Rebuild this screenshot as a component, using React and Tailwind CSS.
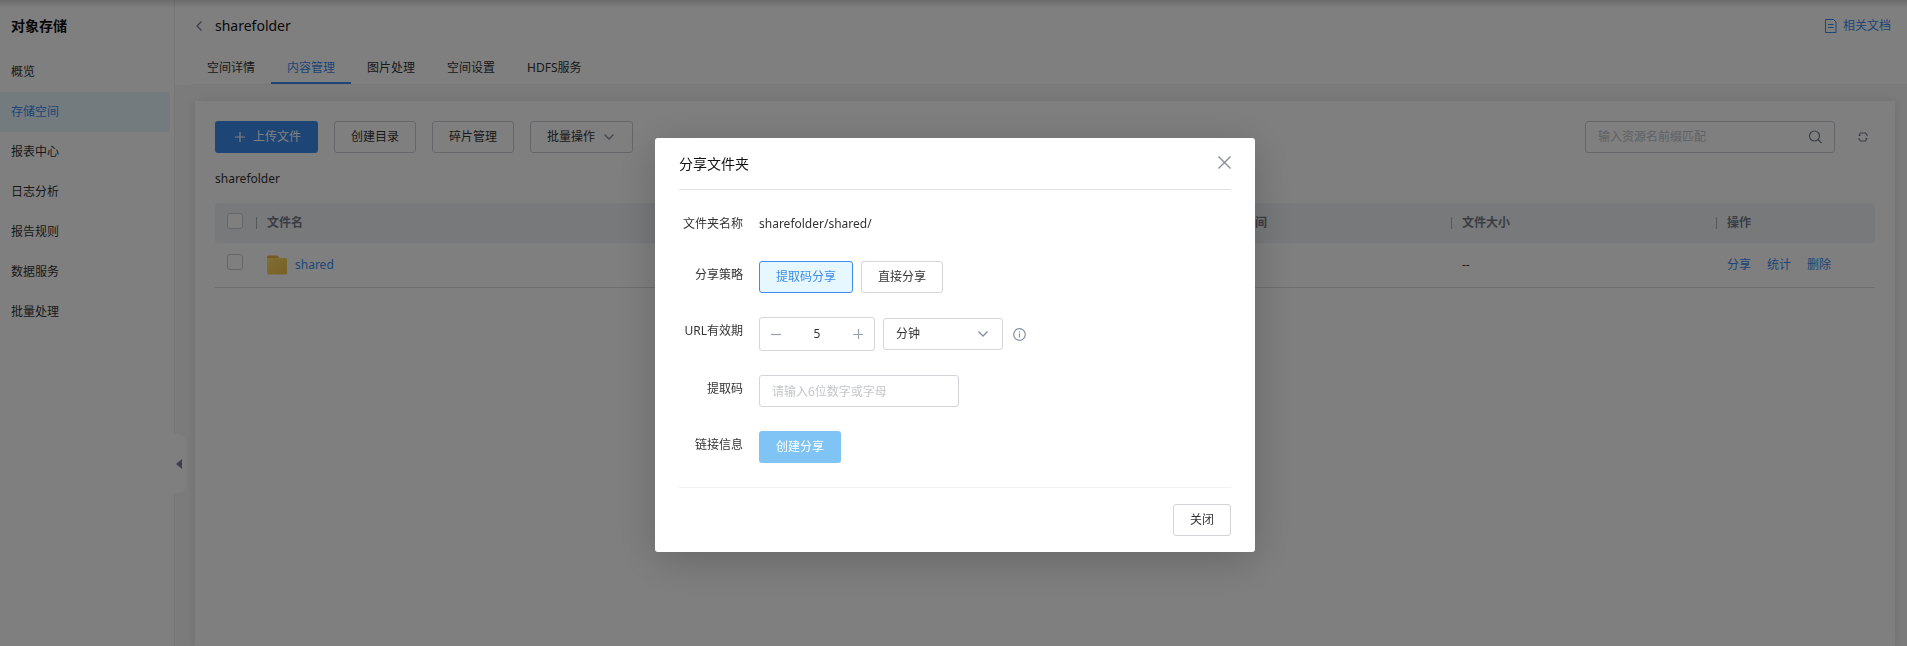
import { useState } from 'react';

const menus = ['概览', '存储空间', '报表中心', '日志分析', '报告规则', '数据服务', '批量处理'];
const tabs = ['空间详情', '内容管理', '图片处理', '空间设置', 'HDFS服务'];

const Chevron = ({ className }) => (
  <svg className={className} width="12" height="12" viewBox="0 0 12 12" fill="none" stroke="currentColor" strokeWidth="1.3">
    <path d="M1.5 3.500l4.500 4.500L10.500 3.500" />
  </svg>
);

const FolderIcon = () => (
  <svg width="20" height="20" viewBox="0 0 20 20">
    <defs>
      <linearGradient id="folder" x1="0" y1="0" x2="1" y2="1">
        <stop offset="0" stopColor="#ffde6c" />
        <stop offset="1" stopColor="#f3be48" />
      </linearGradient>
    </defs>
    <path d="M0 2a1.5 1.5 0 011.500-1.500h8.500a1.500 1.500 0 011.500 1.500L12.500 4H0z" fill="#eeb045" />
    <path d="M0 3h18.500A1.500 1.500 0 0120 4.500v13.500a1.500 1.500 0 01-1.500 1.500h-17A1.500 1.500 0 010 18z" fill="url(#folder)" />
  </svg>
);

const HeadCell = ({ className = '', children }) => (
  <th scope="col" className={`p-0 text-left font-bold text-[#757b87] ${className}`}>
    <div className="flex items-center gap-[10px]">
      <span className="h-3 w-px bg-[#a9aeb8]" />
      {children}
    </div>
  </th>
);

const Checkbox = ({ label }) => (
  <input
    type="checkbox"
    aria-label={label}
    className="block size-4 appearance-none rounded-[3px] border border-[#c9cdd4] bg-white checked:bg-[#3b8ced]"
  />
);

const Sidebar = () => (
  <aside className="relative w-[175px] shrink-0 border-r border-[#eeeef0] bg-white">
    <h1 className="px-[11px] pt-4 text-sm leading-5 font-bold text-[#111]">对象存储</h1>
    <nav className="mt-4 pr-1">
      {menus.map((item) => (
        <a
          key={item}
          href="#"
          className={`flex h-10 items-center rounded-r-[3px] px-[11px] ${
            item === '存储空间' ? 'bg-[#e6f7ff] text-[#3b8ced]' : ''
          }`}
        >
          {item}
        </a>
      ))}
    </nav>
    <button
      type="button"
      aria-label="收起菜单"
      className="absolute top-[434px] -right-3 flex h-[59px] w-[13px] items-center rounded-r-lg bg-white pl-[3px]"
    >
      <svg width="6" height="10" viewBox="0 0 6 10" fill="#7b838f">
        <path d="M6 0v10L0 5z" />
      </svg>
    </button>
  </aside>
);

const Toolbar = () => (
  <div className="flex items-center gap-4">
    <button type="button" className="flex h-8 w-[103px] items-center gap-2 rounded-[3px] bg-[#3b8ced] pl-5 text-white">
      <svg width="10" height="10" viewBox="0 0 10 10" stroke="currentColor" strokeWidth="1.2">
        <path d="M5 0v10M0 5h10" />
      </svg>
      上传文件
    </button>
    <button type="button" className="h-8 rounded-[3px] border border-[#c9cdd4] bg-white px-4">创建目录</button>
    <button type="button" className="h-8 rounded-[3px] border border-[#c9cdd4] bg-white px-4">碎片管理</button>
    <button type="button" className="flex h-8 w-[103px] items-center gap-2 rounded-[3px] border border-[#c9cdd4] bg-white pl-4">
      批量操作
      <Chevron className="text-[#868e9b]" />
    </button>

    <label className="ml-auto flex h-8 w-[250px] items-center rounded-[3px] border border-[#c9cdd4] bg-white px-3">
      <input
        type="text"
        aria-label="搜索资源"
        placeholder="输入资源名前缀匹配"
        className="min-w-0 flex-1 outline-none placeholder:text-[#bfc3ca]"
      />
      <svg width="14" height="14" viewBox="0 0 14 14" fill="none" stroke="#777f8c" strokeWidth="1.2">
        <circle cx="6.500" cy="6" r="5" />
        <path d="M10 9.500l3.500 3.500" />
      </svg>
    </label>
    <button type="button" aria-label="刷新" className="mr-[6px] ml-[6px] text-[#777f8c]">
      <svg width="12" height="12" viewBox="0 0 12 12" fill="none" stroke="currentColor" strokeWidth="1.2">
        <path d="M1.500 4.500h2M2 4.500L3.500 2h5L10.500 4.800M10.500 7.500h-2M10 7.500L8.500 10h-5L1.500 7.200" />
      </svg>
    </button>
  </div>
);

const FileTable = () => (
  <table className="mt-[14px] w-full table-fixed border-separate border-spacing-0">
    <thead>
      <tr className="h-10 bg-[#f0f2f5]">
        <th scope="col" className="w-[41px] rounded-l-[3px] p-0 pb-1 pl-3">
          <Checkbox label="全选" />
        </th>
        <HeadCell>文件名</HeadCell>
        <HeadCell className="w-[243px]">修改时间</HeadCell>
        <HeadCell className="w-[265px]">文件大小</HeadCell>
        <HeadCell className="w-[159px] rounded-r-[3px]">操作</HeadCell>
      </tr>
    </thead>
    <tbody>
      <tr className="h-[45px] [&>td]:border-b [&>td]:border-[#d9dce1] [&>td]:p-0">
        <td>
          <div className="pb-[6px] pl-3">
            <Checkbox label="选择 shared" />
          </div>
        </td>
        <td>
          <a href="#" className="flex items-center gap-2 pl-[11px] text-[#3b8ced]">
            <FolderIcon />
            shared
          </a>
        </td>
        <td />
        <td>
          <div className="pl-[11px]">--</div>
        </td>
        <td>
          <div className="flex gap-4 pl-[11px] text-[#3b8ced]">
            <button type="button">分享</button>
            <button type="button">统计</button>
            <button type="button">删除</button>
          </div>
        </td>
      </tr>
    </tbody>
  </table>
);

const FormRow = ({ label, htmlFor, children }) => (
  <div className="flex">
    <label htmlFor={htmlFor} className="w-16 shrink-0 pt-1 text-right leading-5">{label}</label>
    <div className="ml-4 flex items-center gap-2">{children}</div>
  </div>
);

const ShareDialog = ({ onClose }) => {
  const [strategy, setStrategy] = useState('code');
  const [expire, setExpire] = useState(5);
  const [code, setCode] = useState('');

  const active = 'border-[#3b8ced] bg-[#e6f7ff] text-[#3b8ced]';
  const normal = 'border-[#d3d5d9] bg-white';

  return (
    <div className="fixed inset-0 flex items-start justify-center bg-black/50 pt-[138px] pl-[3px]">
      <div
        role="dialog"
        aria-modal="true"
        aria-labelledby="share-title"
        className="w-[600px] rounded-[3px] bg-white px-6 shadow-[0_8px_40px_rgba(0,0,0,0.2)]"
      >
        <div className="flex h-[52px] items-start justify-between border-b border-[#dfe0e3] pt-4">
          <h2 id="share-title" className="text-sm leading-5 text-[#111]">分享文件夹</h2>
          <button type="button" aria-label="关闭弹窗" onClick={onClose} className="mt-[2px] text-[#868e9b]">
            <svg width="13" height="13" viewBox="0 0 13 13" stroke="currentColor" strokeWidth="1.400">
              <path d="M.5.5l12 12M12.500.5l-12 12" />
            </svg>
          </button>
        </div>

        <div className="flex flex-col gap-6 pt-5 pb-6">
          <div className="flex leading-[27px]">
            <span className="w-16 text-right">文件夹名称</span>
            <span className="ml-4">sharefolder/shared/</span>
          </div>
          <FormRow label="分享策略">
            <button
              type="button"
              onClick={() => setStrategy('code')}
              className={`h-8 rounded-[3px] border px-4 ${strategy === 'code' ? active : normal}`}
            >
              提取码分享
            </button>
            <button
              type="button"
              onClick={() => setStrategy('direct')}
              className={`h-8 rounded-[3px] border px-4 ${strategy === 'direct' ? active : normal}`}
            >
              直接分享
            </button>
          </FormRow>
          <FormRow label="URL有效期" htmlFor="expire">
            <div className="flex h-[34px] w-[116px] items-center rounded-[3px] border border-[#d3d5d9] px-[11px] text-[#9aa1ab]">
              <button type="button" aria-label="减少" onClick={() => setExpire(Math.max(1, expire - 1))}>
                <svg width="10" height="10" viewBox="0 0 10 10" stroke="currentColor" strokeWidth="1.200">
                  <path d="M0 5.500h10" />
                </svg>
              </button>
              <input
                id="expire"
                type="text"
                value={expire}
                onChange={(e) => setExpire(Number(e.target.value) || 1)}
                className="min-w-0 flex-1 text-center text-[#333] outline-none"
              />
              <button type="button" aria-label="增加" onClick={() => setExpire(expire + 1)}>
                <svg width="10" height="10" viewBox="0 0 10 10" stroke="currentColor" strokeWidth="1.200">
                  <path d="M0 5.500h10M5.500 0v10" />
                </svg>
              </button>
            </div>
            <div className="relative">
              <select aria-label="时间单位" className="h-8 w-[120px] appearance-none rounded-[3px] border border-[#d3d5d9] bg-white px-3">
                <option>分钟</option>
                <option>小时</option>
                <option>天</option>
              </select>
              <Chevron className="pointer-events-none absolute top-[10px] right-[14px] text-[#868e9b]" />
            </div>
            <svg className="ml-[2px]" width="13" height="13" viewBox="0 0 13 13" fill="none" stroke="#868e9b" strokeWidth="1.200">
              <circle cx="6.500" cy="6.500" r="5.800" />
              <path d="M6.500 5.500V9.500M6.500 3.200v1.200" />
            </svg>
          </FormRow>
          <FormRow label="提取码" htmlFor="code">
            <input
              id="code"
              type="text"
              maxLength={6}
              value={code}
              onChange={(e) => setCode(e.target.value)}
              placeholder="请输入6位数字或字母"
              className="h-8 w-[200px] rounded-[3px] border border-[#d3d5d9] px-3 outline-none placeholder:text-[#c4c6ca]"
            />
          </FormRow>
          <FormRow label="链接信息">
            <button type="button" disabled={!code} className="h-8 w-[82px] rounded-[3px] bg-[#3b8ced] text-white disabled:bg-[#7fc4f4]">
              创建分享
            </button>
          </FormRow>
        </div>

        <div className="flex justify-end border-t border-[#f0f0f2] py-4">
          <button type="button" onClick={onClose} className="h-8 rounded-[3px] border border-[#d3d5d9] bg-white px-4">
            关闭
          </button>
        </div>
      </div>
    </div>
  );
};

const App = () => {
  const [open, setOpen] = useState(true);

  return (
    <div className="flex min-h-screen bg-[#f7f7f9] font-['Noto_Sans','Noto_Sans_CJK_SC',sans-serif] text-xs text-[#333]">
      <Sidebar />
      <main className="flex min-w-0 flex-1 flex-col">
        <header className="bg-white pl-[18px]">
          <div className="flex h-[52px] items-center justify-between pr-4">
            <div className="flex items-center gap-[10px]">
              <button type="button" aria-label="返回">
                <Chevron className="rotate-90 text-[#777f8c]" />
              </button>
              <span className="text-sm text-[#111]">sharefolder</span>
            </div>
            <a href="#" className="flex items-center gap-[6px] text-[#3b8ced]">
              <svg width="12" height="16" viewBox="0 0 12 16" fill="none" stroke="currentColor">
                <path d="M.5 1.500h8l2.500 2.500v10.500H.5zM3 6.500h5.500M3 9.500h5.500" />
              </svg>
              相关文档
            </a>
          </div>
          <nav className="-ml-[2px] flex h-[33px] border-b border-[#eeeef0]">
            {tabs.map((tab) => (
              <a
                key={tab}
                href="#"
                className={`flex items-center px-4 ${
                  tab === '内容管理' ? 'border-b-2 border-[#3b8ced] pt-[2px] text-[#3b8ced]' : ''
                }`}
              >
                {tab}
              </a>
            ))}
          </nav>
        </header>

        <section className="mt-4 mr-3 ml-5 flex-1 bg-white p-5 shadow-[0_0_10px_rgba(0,0,0,0.1)]">
          <Toolbar />
          <div className="mt-4 leading-5">sharefolder</div>
          <FileTable />
        </section>
      </main>

      {/* shadow cast by the top bar */}
      <div className="pointer-events-none fixed inset-x-0 top-0 h-2 bg-gradient-to-b from-black/15 to-transparent" />

      {open && <ShareDialog onClose={() => setOpen(false)} />}
    </div>
  );
};

export default App;
